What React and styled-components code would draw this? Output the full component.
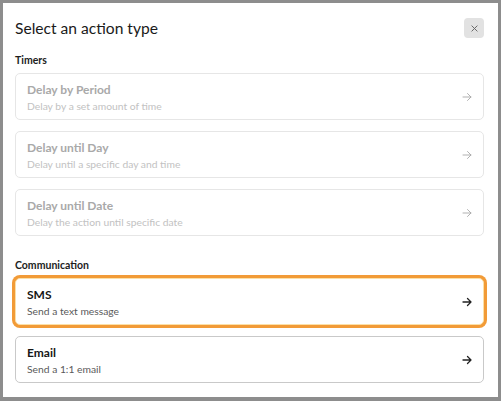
import React from "react";
import styled, { createGlobalStyle } from "styled-components";

const GlobalStyle = createGlobalStyle`
  html, body {
    margin: 0;
    padding: 0;
    background: #8d8d8d;
    font-family: Lato, "Open Sans", sans-serif;
  }
`;

const timers = [
  { title: "Delay by Period", desc: "Delay by a set amount of time" },
  { title: "Delay until Day", desc: "Delay until a specific day and time" },
  { title: "Delay until Date", desc: "Delay the action until specific date" },
];

const communication = [
  { title: "SMS", desc: "Send a text message", focused: true },
  { title: "Email", desc: "Send a 1:1 email" },
];

function Arrow({ muted }) {
  return (
    <svg width="10" height="10" viewBox="0 0 10 10" fill="none">
      <path
        d="M1 5h8M5.5 1.5L9 5l-3.5 3.5"
        stroke={muted ? "#a8a8a8" : "#222"}
        strokeWidth={muted ? 0.9 : 1.3}
        strokeLinecap="round"
        strokeLinejoin="round"
      />
    </svg>
  );
}

function ActionCard({ title, desc, disabled, focused }) {
  return (
    <Card $disabled={disabled} $focused={focused}>
      <CardText>
        <CardTitle $disabled={disabled}>{title}</CardTitle>
        <CardDesc $disabled={disabled}>{desc}</CardDesc>
      </CardText>
      <Arrow muted={disabled} />
    </Card>
  );
}

export default function App() {
  return (
    <>
      <GlobalStyle />
      <Modal>
        <Header>
          <Title>Select an action type</Title>
          <CloseButton aria-label="Close">
            <svg width="7" height="7" viewBox="0 0 8 8">
              <path d="M1 1l6 6M7 1L1 7" stroke="#666" strokeWidth="1.1" strokeLinecap="round" />
            </svg>
          </CloseButton>
        </Header>

        <Section>
          <SectionLabel>Timers</SectionLabel>
          <CardList>
            {timers.map((t) => (
              <ActionCard key={t.title} {...t} disabled />
            ))}
          </CardList>
        </Section>

        <Section $gap={23}>
          <SectionLabel>Communication</SectionLabel>
          <CardList>
            {communication.map((c) => (
              <ActionCard key={c.title} {...c} />
            ))}
          </CardList>
        </Section>
      </Modal>
    </>
  );
}

const Modal = styled.div`
  margin: 3px;
  height: 394px;
  box-sizing: border-box;
  background: #fff;
  padding: 14px 14px 0 12px;
  display: flex;
  flex-direction: column;
`;

const Header = styled.div`
  display: flex;
  align-items: center;
  justify-content: space-between;
  height: 22px;
`;

const Title = styled.h1`
  margin: 0;
  font-size: 15.6px;
  line-height: 22px;
  font-weight: 400;
  color: #1a1a1a;
`;

const CloseButton = styled.button`
  width: 20px;
  height: 20px;
  border: none;
  border-radius: 4px;
  background: #e2e2e2;
  display: flex;
  align-items: center;
  justify-content: center;
  padding: 0;
`;

const Section = styled.section`
  margin-top: ${(p) => p.$gap || 15}px;
`;

const SectionLabel = styled.div`
  font-size: 10.5px;
  line-height: 13px;
  font-weight: 700;
  color: #1d1d1d;
  margin-bottom: 6px;
`;

const CardList = styled.div`
  display: flex;
  flex-direction: column;
  gap: 11px;
`;

const Card = styled.div`
  height: 47px;
  box-sizing: border-box;
  border: 1px solid
    ${(p) => (p.$disabled ? "#e6e6e6" : p.$focused ? "#fbe0a8" : "#c9c9c9")};
  border-radius: 5px;
  padding: 0 11px 0 11px;
  display: flex;
  align-items: center;
  justify-content: space-between;
  box-shadow: ${(p) => (p.$focused ? "0 0 0 3px #f29b37" : "none")};
  background: #fff;
`;

const CardText = styled.div`
  display: flex;
  flex-direction: column;
  gap: 3px;
  margin-top: 1px;
`;

const CardTitle = styled.div`
  font-size: 12px;
  line-height: 15px;
  font-weight: 700;
  color: ${(p) => (p.$disabled ? "#a9a9a9" : "#161616")};
`;

const CardDesc = styled.div`
  font-size: 10.3px;
  line-height: 13px;
  color: ${(p) => (p.$disabled ? "#c2c2c2" : "#5a5a5a")};
`;
